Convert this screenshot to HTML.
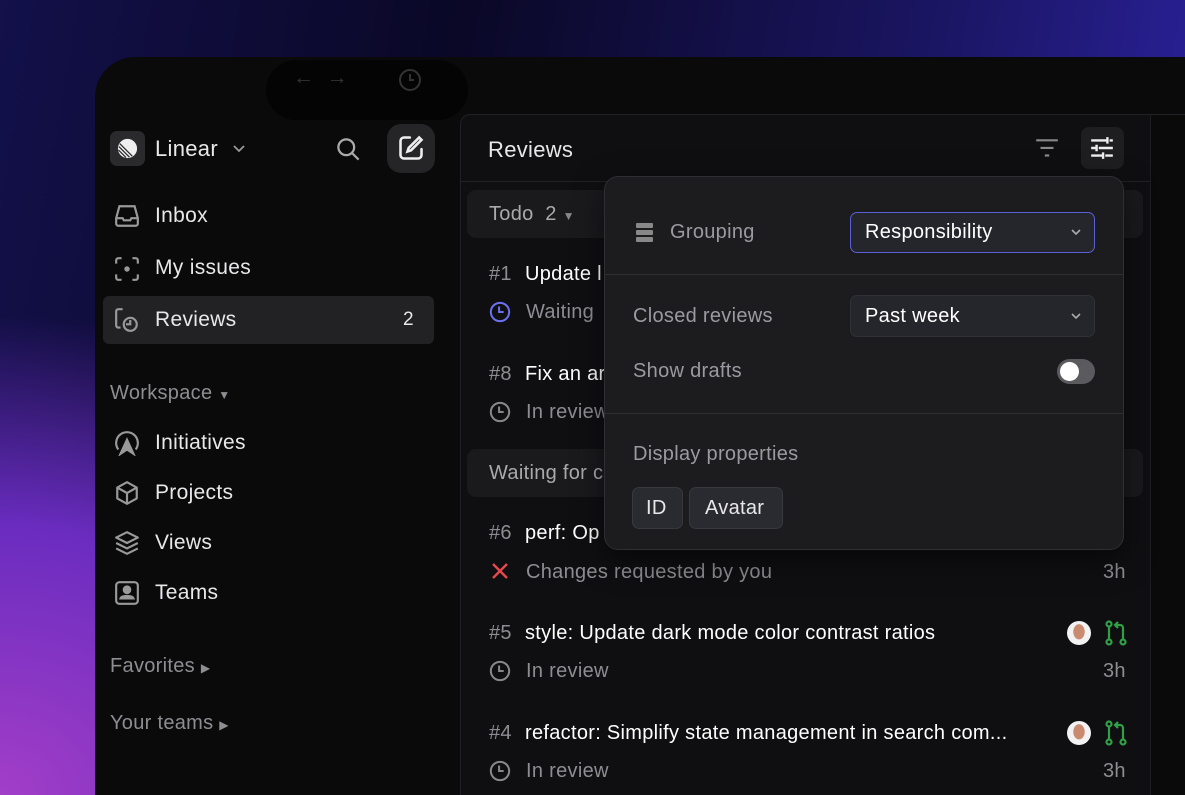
<!DOCTYPE html>
<html style="width:1185px;height:795px;overflow:hidden"><head><meta charset="utf-8"><style>
*{box-sizing:border-box;margin:0;padding:0}
html,body{width:1185px;height:795px;overflow:hidden}
body{font-family:"Liberation Sans",sans-serif;position:relative;
background:radial-gradient(ellipse 700px 600px at 0% 100%,#a23ec8 0%,#6a2cbf 45%,rgba(60,25,160,0) 80%),linear-gradient(100deg,#13104a 0%,#0a0826 35%,#1a1560 70%,#2e24a8 100%);}
.a{position:absolute}
.win{left:95px;top:57px;width:1090px;height:738px;background:#0a0a0a;border-radius:40px 0 0 0}
.t{color:#e8e8ea;font-size:21px;position:absolute;white-space:nowrap;letter-spacing:0.3px}
.g{color:#8d8d92}
.main{left:460px;top:114px;width:725px;height:681px;background:#0f0f11;border-left:1px solid #222226;border-top:1px solid #222226;border-radius:10px 0 0 0}
svg{position:absolute}
</style></head><body>
<div class="a win"></div>
<div class="a" style="left:266px;top:60px;width:202px;height:60px;background:#040404;border-radius:30px"></div>
<div class="t" style="left:293px;top:66px;color:#333">← &nbsp;→</div>
<svg style="left:398px;top:68px" width="24" height="24" viewBox="0 0 24 24" fill="none" stroke="#333" stroke-width="2"><circle cx="12" cy="12" r="10"/><path d="M12 6v6h4"/></svg>

<!-- sidebar -->
<div class="a" style="left:110px;top:131px;width:35px;height:35px;background:#2a2a2c;border-radius:7px"></div>
<svg style="left:116px;top:137px" width="23" height="23" viewBox="0 0 24 24"><circle cx="12" cy="12" r="10" fill="#eee"/><path d="M3 10l11 11M2.5 13.5l8 8M4 7l13 13" stroke="#2a2a2c" stroke-width="1.3"/></svg>
<div class="t" style="left:155px;top:136px;font-size:22px">Linear</div>
<svg style="left:232px;top:143px" width="14" height="12" viewBox="0 0 14 12" fill="none" stroke="#999" stroke-width="1.8"><path d="M2 3l5 5 5-5"/></svg>
<svg style="left:335px;top:136px" width="27" height="27" viewBox="0 0 24 24" fill="none" stroke="#aaa" stroke-width="2"><circle cx="10" cy="10" r="7"/><path d="M15 15l6 6"/></svg>
<div class="a" style="left:387px;top:124px;width:48px;height:49px;background:#252528;border-radius:14px"></div>
<svg style="left:397px;top:134px" width="28" height="28" viewBox="0 0 24 24" fill="none" stroke="#eee" stroke-width="2.2" stroke-linecap="round"><path d="M11 3H6a3 3 0 0 0-3 3v12a3 3 0 0 0 3 3h12a3 3 0 0 0 3-3v-5"/><path d="M19 3l2 2-9 9-3 1 1-3z"/></svg>

<svg style="left:114px;top:203px" width="26" height="26" viewBox="0 0 24 24" fill="none" stroke="#999" stroke-width="2"><path d="M5 3h14l3 11v5a2 2 0 0 1-2 2H4a2 2 0 0 1-2-2v-5z"/><path d="M2 14h6l1 2h6l1-2h6" /></svg>
<div class="t" style="left:155px;top:204px">Inbox</div>
<svg style="left:114px;top:256px" width="26" height="26" viewBox="0 0 24 24" fill="none" stroke="#999" stroke-width="2"><path d="M2 7V4a2 2 0 0 1 2-2h3M17 2h3a2 2 0 0 1 2 2v3M22 17v3a2 2 0 0 1-2 2h-3M7 22H4a2 2 0 0 1-2-2v-3"/><circle cx="12" cy="12" r="1.5" fill="#999"/></svg>
<div class="t" style="left:155px;top:256px">My issues</div>
<div class="a" style="left:103px;top:296px;width:331px;height:48px;background:#222225;border-radius:6px"></div>
<svg style="left:114px;top:307px" width="26" height="26" viewBox="0 0 24 24" fill="none" stroke="#999" stroke-width="2"><path d="M8 2H4a2 2 0 0 0-2 2v13a2 2 0 0 0 2 2h2"/><circle cx="15" cy="16" r="6"/><path d="M15 12v4h-4" /></svg>
<div class="t" style="left:155px;top:308px">Reviews</div>
<div class="t" style="left:403px;top:309px;font-size:19px">2</div>

<div class="t g" style="left:110px;top:382px;font-size:20px">Workspace <span style="font-size:12px">▼</span></div>
<svg style="left:114px;top:430px" width="26" height="26" viewBox="0 0 24 24" fill="none" stroke="#999" stroke-width="2"><path d="M4 18A10 10 0 1 1 20 18"/><path d="M12 9l-6 13 6-4 6 4z" fill="#999"/></svg>
<div class="t" style="left:155px;top:431px">Initiatives</div>
<svg style="left:114px;top:480px" width="26" height="26" viewBox="0 0 24 24" fill="none" stroke="#999" stroke-width="2" stroke-linejoin="round"><path d="M12 2l9 5v10l-9 5-9-5V7z"/><path d="M3 7l9 5 9-5M12 12v10"/></svg>
<div class="t" style="left:155px;top:481px">Projects</div>
<svg style="left:114px;top:530px" width="26" height="26" viewBox="0 0 24 24" fill="none" stroke="#999" stroke-width="2" stroke-linejoin="round"><path d="M12 2l10 5-10 5L2 7z"/><path d="M2 12l10 5 10-5M2 17l10 5 10-5"/></svg>
<div class="t" style="left:155px;top:531px">Views</div>
<svg style="left:114px;top:580px" width="26" height="26" viewBox="0 0 24 24" fill="none" stroke="#999" stroke-width="2"><rect x="2" y="2" width="20" height="20" rx="3"/><circle cx="12" cy="9" r="3" fill="#999"/><path d="M6 17c1-3 11-3 12 0z" fill="#999"/></svg>
<div class="t" style="left:155px;top:581px">Teams</div>
<div class="t g" style="left:110px;top:655px;font-size:20px">Favorites <span style="font-size:12px">▶</span></div>
<div class="t g" style="left:110px;top:712px;font-size:20px">Your teams <span style="font-size:12px">▶</span></div>

<!-- main -->
<div class="a main"></div>
<div class="a" style="left:1150px;top:114px;width:1px;height:681px;background:#1e1e22"></div>
<div class="a" style="left:1151px;top:115px;width:34px;height:680px;background:#0a0a0b"></div>
<div class="a" style="left:461px;top:181px;width:689px;height:1px;background:#222226"></div>
<div class="t" style="left:488px;top:137px;font-size:22px">Reviews</div>
<svg style="left:1034px;top:137px" width="26" height="24" viewBox="0 0 24 22" fill="none" stroke="#888" stroke-width="2"><path d="M2 3h20M6 10h12M10 17h4"/></svg>
<div class="a" style="left:1081px;top:127px;width:43px;height:42px;background:#1e1e21;border-radius:8px"></div>
<svg style="left:1089px;top:135px" width="26" height="26" viewBox="0 0 24 24" fill="none" stroke="#eee" stroke-width="2.2"><path d="M2 5h14M19 5h3M2 12h4M9 12h13M2 19h10M15 19h7M17 2v6M7 9v6M13 16v6"/></svg>

<div class="a" style="left:467px;top:190px;width:676px;height:48px;background:#1a1a1d;border-radius:9px"></div>
<div class="t g" style="left:489px;top:203px;font-size:20px;color:#aaa">Todo &nbsp;2 <span style="font-size:12px;color:#888">▼</span></div>
<div class="t g" style="left:489px;top:263px;font-size:20px">#1</div><div class="t" style="left:525px;top:263px;font-size:20px;color:#fff">Update l</div>
<svg style="left:489px;top:301px" width="22" height="22" viewBox="0 0 24 24" fill="none" stroke="#6b6ff0" stroke-width="2.2"><circle cx="12" cy="12" r="10"/><path d="M11 6v6h5"/></svg>
<div class="t g" style="left:526px;top:301px;font-size:20px">Waiting</div>
<div class="t g" style="left:489px;top:363px;font-size:20px">#8</div><div class="t" style="left:525px;top:363px;font-size:20px;color:#fff">Fix an ar</div>
<svg style="left:489px;top:401px" width="22" height="22" viewBox="0 0 24 24" fill="none" stroke="#888" stroke-width="2.2"><circle cx="12" cy="12" r="10"/><path d="M11 6v6h5"/></svg>
<div class="t g" style="left:526px;top:401px;font-size:20px">In review</div>
<div class="a" style="left:467px;top:449px;width:676px;height:48px;background:#1a1a1d;border-radius:9px"></div>
<div class="t g" style="left:489px;top:462px;font-size:20px;color:#aaa">Waiting for c</div>
<div class="t g" style="left:489px;top:522px;font-size:20px">#6</div><div class="t" style="left:525px;top:522px;font-size:20px;color:#fff">perf: Op</div>
<svg style="left:490px;top:561px" width="20" height="20" viewBox="0 0 20 20" fill="none" stroke="#e5484d" stroke-width="2.4"><path d="M3 3l14 14M17 3L3 17"/></svg>
<div class="t g" style="left:526px;top:561px;font-size:20px">Changes requested by you</div>
<div class="t g" style="left:1103px;top:561px;font-size:20px">3h</div>

<div class="t g" style="left:489px;top:622px;font-size:20px">#5</div><div class="t" style="left:525px;top:622px;font-size:20px;color:#fff">style: Update dark mode color contrast ratios</div>
<div class="a" style="left:1067px;top:621px;width:24px;height:24px;border-radius:50%;background:radial-gradient(ellipse 6px 8px at 50% 45%,#c98a70 0 90%,#f2f2f2 100%)"></div>
<svg style="left:1104px;top:620px" width="24" height="26" viewBox="0 0 24 26" fill="none" stroke="#30a046" stroke-width="2.2"><circle cx="5" cy="4" r="2.5"/><circle cx="5" cy="22" r="2.5"/><circle cx="19" cy="22" r="2.5"/><path d="M5 7v12M19 19V8a3 3 0 0 0-3-3h-4M14 2l-3 3 3 3"/></svg>
<svg style="left:489px;top:660px" width="22" height="22" viewBox="0 0 24 24" fill="none" stroke="#888" stroke-width="2.2"><circle cx="12" cy="12" r="10"/><path d="M11 6v6h5"/></svg>
<div class="t g" style="left:526px;top:660px;font-size:20px">In review</div>
<div class="t g" style="left:1103px;top:660px;font-size:20px">3h</div>

<div class="t g" style="left:489px;top:722px;font-size:20px">#4</div><div class="t" style="left:525px;top:722px;font-size:20px;color:#fff">refactor: Simplify state management in search com...</div>
<div class="a" style="left:1067px;top:721px;width:24px;height:24px;border-radius:50%;background:radial-gradient(ellipse 6px 8px at 50% 45%,#c98a70 0 90%,#f2f2f2 100%)"></div>
<svg style="left:1104px;top:720px" width="24" height="26" viewBox="0 0 24 26" fill="none" stroke="#30a046" stroke-width="2.2"><circle cx="5" cy="4" r="2.5"/><circle cx="5" cy="22" r="2.5"/><circle cx="19" cy="22" r="2.5"/><path d="M5 7v12M19 19V8a3 3 0 0 0-3-3h-4M14 2l-3 3 3 3"/></svg>
<svg style="left:489px;top:760px" width="22" height="22" viewBox="0 0 24 24" fill="none" stroke="#888" stroke-width="2.2"><circle cx="12" cy="12" r="10"/><path d="M11 6v6h5"/></svg>
<div class="t g" style="left:526px;top:760px;font-size:20px">In review</div>
<div class="t g" style="left:1103px;top:760px;font-size:20px">3h</div>

<!-- popover -->
<div class="a" style="left:604px;top:176px;width:520px;height:374px;background:#1c1c1f;border:1px solid #2e2e33;border-radius:14px;box-shadow:0 10px 30px rgba(0,0,0,.5)"></div>
<div class="a" style="left:636px;top:223px;width:17px;height:5px;background:#888;border-radius:1px"></div>
<div class="a" style="left:636px;top:230px;width:17px;height:5px;background:#888;border-radius:1px"></div>
<div class="a" style="left:636px;top:237px;width:17px;height:5px;background:#888;border-radius:1px"></div>
<div class="t g" style="left:670px;top:221px;font-size:20px;color:#9a9aa0">Grouping</div>
<div class="a" style="left:850px;top:212px;width:245px;height:41px;background:#25262c;border:1px solid #5b5fd6;border-radius:7px"></div>
<div class="t" style="left:865px;top:221px;font-size:20px;color:#fff">Responsibility</div>
<svg style="left:1070px;top:227px" width="12" height="10" viewBox="0 0 12 10" fill="none" stroke="#aaa" stroke-width="1.6"><path d="M2 3l4 4 4-4"/></svg>
<div class="a" style="left:605px;top:274px;width:518px;height:1px;background:#2e2e33"></div>
<div class="t g" style="left:633px;top:305px;font-size:20px;color:#9a9aa0">Closed reviews</div>
<div class="a" style="left:850px;top:295px;width:245px;height:42px;background:#25262c;border:1px solid #303036;border-radius:7px"></div>
<div class="t" style="left:865px;top:305px;font-size:20px;color:#fff">Past week</div>
<svg style="left:1070px;top:311px" width="12" height="10" viewBox="0 0 12 10" fill="none" stroke="#aaa" stroke-width="1.6"><path d="M2 3l4 4 4-4"/></svg>
<div class="t g" style="left:633px;top:360px;font-size:20px;color:#9a9aa0">Show drafts</div>
<div class="a" style="left:1057px;top:359px;width:38px;height:25px;background:#5a5a5f;border-radius:13px"></div>
<div class="a" style="left:1060px;top:362px;width:19px;height:19px;background:#fff;border-radius:50%"></div>
<div class="a" style="left:605px;top:413px;width:518px;height:1px;background:#2e2e33"></div>
<div class="t g" style="left:633px;top:443px;font-size:20px;color:#9a9aa0">Display properties</div>
<div class="a" style="left:632px;top:487px;width:51px;height:42px;background:#2a2b30;border:1px solid #38383e;border-radius:7px"></div>
<div class="t" style="left:646px;top:497px;font-size:20px">ID</div>
<div class="a" style="left:689px;top:487px;width:94px;height:42px;background:#2a2b30;border:1px solid #38383e;border-radius:7px"></div>
<div class="t" style="left:705px;top:497px;font-size:20px">Avatar</div>
</body></html>
